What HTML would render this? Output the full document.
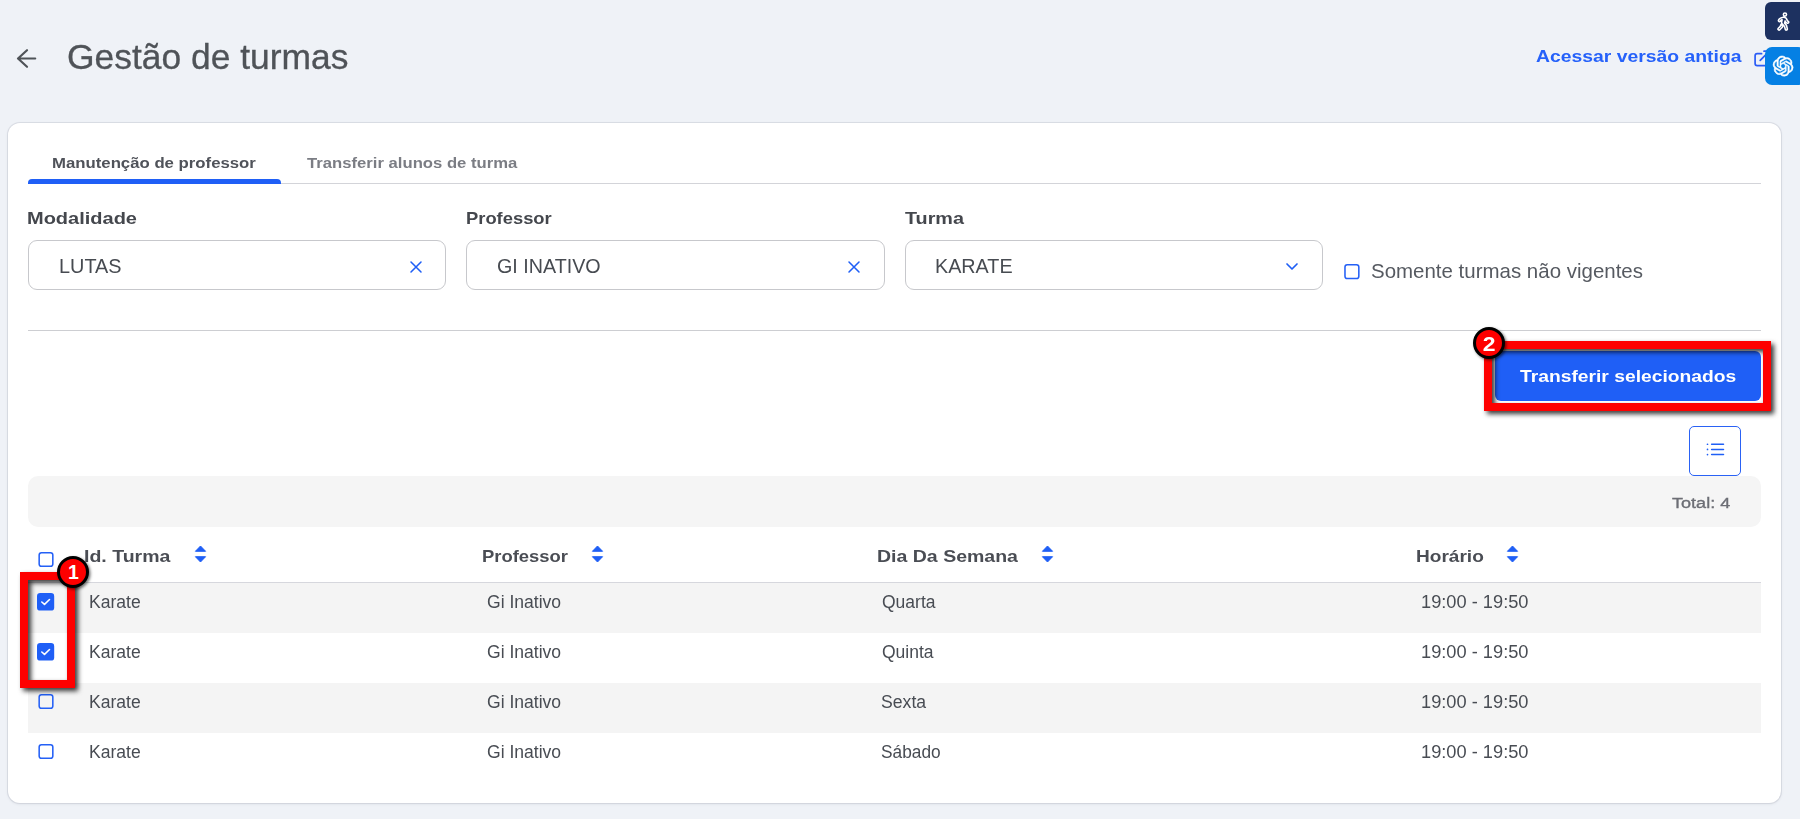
<!DOCTYPE html>
<html lang="pt-BR"><head><meta charset="utf-8"><title>Gestão de turmas</title>
<style>
*{margin:0;padding:0;box-sizing:border-box}
html,body{width:1800px;height:819px;overflow:hidden}
body{position:relative;background:#eff2f7;font-family:"Liberation Sans",sans-serif}
.a{position:absolute}
.t{position:absolute;transform-origin:0 50%;white-space:nowrap;line-height:1;font-family:"Liberation Sans",sans-serif}
.card{left:8px;top:123px;width:1773px;height:680px;background:#fff;border-radius:12px;box-shadow:0 0 0 1px rgba(200,204,214,.55),0 1px 3px rgba(60,70,90,.13)}
.inp{top:240px;height:50px;width:418px;border:1px solid #c7c8cc;border-radius:9px;background:#fff}
.cb{width:15px;height:15px;border:1.9px solid #2a62f5;border-radius:3px;background:#fff}
.cbc{width:17px;height:17px;border-radius:3.5px;background:#1f5ff6}
.row{left:28px;width:1733px;height:50px;background:#f4f4f4}
svg{position:absolute;overflow:visible}

</style></head>
<body>
<!-- back arrow -->
<svg style="left:16px;top:48px" width="22" height="22" viewBox="0 0 22 22" fill="none" stroke="#4f5358" stroke-width="2.200" stroke-linecap="round" stroke-linejoin="round"><path d="M19.200 10.500H2.200M11 2.200L2 10.500L11 18.800"/></svg>
<!-- external link icon -->
<svg style="left:0;top:0.600px" width="1800" height="100" viewBox="0 0 1800 100" fill="none" stroke="#2a5cf6" stroke-width="1.700" stroke-linecap="round" stroke-linejoin="round"><path d="M1761.600 52.700H1757.200A2.100 2.100 0 0 0 1755.100 54.800V62.600A2.100 2.100 0 0 0 1757.200 64.700H1766.500A2.100 2.100 0 0 0 1768.600 62.600V58.500M1760.200 59.400L1769.400 50.200M1764 50.200H1769.400V55.600"/></svg>
<div class="a card"></div>
<!-- tabs -->
<div class="a" style="left:28px;top:183px;width:1733px;height:1px;background:#d3d4d9"></div>
<div class="a" style="left:28px;top:179px;width:253px;height:4.500px;background:#1f5ff6;border-radius:4px 4px 0 0"></div>
<!-- inputs -->
<div class="a inp" style="left:28px"></div>
<div class="a inp" style="left:466px;width:419px"></div>
<div class="a inp" style="left:905px"></div>
<svg style="left:409.500px;top:260.500px" width="12" height="12" viewBox="0 0 12 12" fill="none" stroke="#1f5ff6" stroke-width="1.550" stroke-linecap="round"><path d="M1 1L11 11M11 1L1 11"/></svg>
<svg style="left:848px;top:260.500px" width="12" height="12" viewBox="0 0 12 12" fill="none" stroke="#1f5ff6" stroke-width="1.550" stroke-linecap="round"><path d="M1 1L11 11M11 1L1 11"/></svg>
<svg style="left:1286px;top:263px" width="12" height="7" viewBox="0 0 12 7" fill="none" stroke="#1f5ff6" stroke-width="1.7" stroke-linecap="round" stroke-linejoin="round"><path d="M1 1L6 6L11 1"/></svg>
<!-- hr -->
<div class="a" style="left:28px;top:330px;width:1733px;height:1px;background:#cdced2"></div>
<!-- button -->
<div class="a" style="left:1495px;top:351px;width:266px;height:50px;background:#1f5ff6;border-radius:6px"></div>
<!-- list button -->
<div class="a" style="left:1689px;top:426px;width:52px;height:50px;border:1px solid #2a62f5;border-radius:5px;background:#fff"></div>
<svg style="left:1706px;top:442px" width="19" height="14" viewBox="0 0 19 14" fill="none" stroke="#1f5ff6" stroke-width="1.500" stroke-linecap="round"><path d="M5.600 2.250H17.500M5.600 7.400H17.500M5.600 12.550H17.500"/><path d="M1.500 2.250h.01M1.500 7.400h.01M1.500 12.550h.01" stroke-width="1.700"/></svg>
<!-- total bar -->
<div class="a" style="left:28px;top:476px;width:1733px;height:51px;background:#f5f5f5;border-radius:10px"></div>
<!-- table -->
<div class="a" style="left:28px;top:582px;width:1733px;height:1px;background:#d6d7dd"></div>
<div class="a row" style="top:583px"></div>
<div class="a row" style="top:683px"></div>
<!-- checkboxes -->
<svg style="left:0;top:0" width="1800" height="819" viewBox="0 0 1800 819">
<rect x="1344.98" y="264.77" width="13.85" height="13.75" rx="2.3" fill="none" stroke="#2460f6" stroke-width="1.55"/>
<rect x="39.17" y="552.77" width="13.65" height="13.55" rx="2.3" fill="none" stroke="#2460f6" stroke-width="1.55"/>
<rect x="39.17" y="694.77" width="13.65" height="13.45" rx="2.3" fill="none" stroke="#2460f6" stroke-width="1.55"/>
<rect x="39.17" y="744.77" width="13.65" height="13.45" rx="2.3" fill="none" stroke="#2460f6" stroke-width="1.55"/>
<rect x="37" y="593.1" width="17.2" height="17.5" rx="3.2" fill="#1f5ff6"/><path d="M41.80 602.00L44.50 604.40L49.50 599.50" fill="none" stroke="#fff" stroke-width="1.600" stroke-linecap="round" stroke-linejoin="round"/>
<rect x="37" y="643.1" width="17.2" height="17.5" rx="3.2" fill="#1f5ff6"/><path d="M41.80 652.00L44.50 654.40L49.50 649.50" fill="none" stroke="#fff" stroke-width="1.600" stroke-linecap="round" stroke-linejoin="round"/>
</svg>
<!-- sort icons -->
<svg style="left:194px;top:545px" width="13" height="18" viewBox="0 0 13 18" fill="#1f5ff6" stroke="#1f5ff6" stroke-width="1" stroke-linejoin="round"><path d="M6.500 1L11.600 6.300H1.400ZM6.500 17L11.600 11.700H1.400Z"/></svg>
<svg style="left:590.700px;top:545px" width="13" height="18" viewBox="0 0 13 18" fill="#1f5ff6" stroke="#1f5ff6" stroke-width="1" stroke-linejoin="round"><path d="M6.500 1L11.600 6.300H1.400ZM6.500 17L11.600 11.700H1.400Z"/></svg>
<svg style="left:1040.500px;top:545px" width="13" height="18" viewBox="0 0 13 18" fill="#1f5ff6" stroke="#1f5ff6" stroke-width="1" stroke-linejoin="round"><path d="M6.500 1L11.600 6.300H1.400ZM6.500 17L11.600 11.700H1.400Z"/></svg>
<svg style="left:1506px;top:545px" width="13" height="18" viewBox="0 0 13 18" fill="#1f5ff6" stroke="#1f5ff6" stroke-width="1" stroke-linejoin="round"><path d="M6.500 1L11.600 6.300H1.400ZM6.500 17L11.600 11.700H1.400Z"/></svg>

<span class="t" style="left:66.77px;top:39.75px;font-size:34.5px;font-weight:400;color:#4f5358;transform:scaleX(1.0265);-webkit-text-stroke:0.3px #4f5358;">Gestão de turmas</span>
<span class="t" style="left:1535.63px;top:47.75px;font-size:16.5px;font-weight:700;color:#2561fa;transform:scaleX(1.1729);">Acessar versão antiga</span>
<span class="t" style="left:52.22px;top:155.00px;font-size:15px;font-weight:700;color:#50535a;transform:scaleX(1.1167);">Manutenção de professor</span>
<span class="t" style="left:306.67px;top:155.00px;font-size:15px;font-weight:700;color:#7b7d84;transform:scaleX(1.1114);">Transferir alunos de turma</span>
<span class="t" style="left:27.18px;top:210.00px;font-size:17px;font-weight:700;color:#44474d;transform:scaleX(1.1761);">Modalidade</span>
<span class="t" style="left:465.67px;top:210.00px;font-size:17px;font-weight:700;color:#44474d;transform:scaleX(1.0798);">Professor</span>
<span class="t" style="left:905.00px;top:210.00px;font-size:17px;font-weight:700;color:#44474d;transform:scaleX(1.1626);">Turma</span>
<span class="t" style="left:59.03px;top:256.25px;font-size:20.5px;font-weight:400;color:#474b51;transform:scaleX(0.9687);">LUTAS</span>
<span class="t" style="left:496.71px;top:256.25px;font-size:20.5px;font-weight:400;color:#474b51;transform:scaleX(0.9613);">GI INATIVO</span>
<span class="t" style="left:935.04px;top:256.25px;font-size:20.5px;font-weight:400;color:#474b51;transform:scaleX(0.9636);">KARATE</span>
<span class="t" style="left:1371.03px;top:260.00px;font-size:21px;font-weight:400;color:#565a61;transform:scaleX(0.9748);">Somente turmas não vigentes</span>
<span class="t" style="left:1519.94px;top:368.35px;font-size:17.3px;font-weight:700;color:#ffffff;transform:scaleX(1.1147);">Transferir selecionados</span>
<span class="t" style="left:1671.98px;top:494.75px;font-size:15.5px;font-weight:400;color:#6c6e75;transform:scaleX(1.1654);-webkit-text-stroke:0.35px #6c6e75;">Total: 4</span>
<span class="t" style="left:83.97px;top:549.20px;font-size:16.6px;font-weight:700;color:#4a4d54;transform:scaleX(1.1758);">Id. Turma</span>
<span class="t" style="left:481.76px;top:549.20px;font-size:16.6px;font-weight:700;color:#4a4d54;transform:scaleX(1.1099);">Professor</span>
<span class="t" style="left:876.92px;top:549.20px;font-size:16.6px;font-weight:700;color:#4a4d54;transform:scaleX(1.1757);">Dia Da Semana</span>
<span class="t" style="left:1415.94px;top:549.20px;font-size:16.6px;font-weight:700;color:#4a4d54;transform:scaleX(1.1492);">Horário</span>
<span class="t" style="left:88.70px;top:594.25px;font-size:17.5px;font-weight:400;color:#484c53;transform:scaleX(1.0037);">Karate</span>
<span class="t" style="left:487.00px;top:594.25px;font-size:17.5px;font-weight:400;color:#484c53;transform:scaleX(1.0025);">Gi Inativo</span>
<span class="t" style="left:882.19px;top:594.25px;font-size:17.5px;font-weight:400;color:#484c53;transform:scaleX(1.0002);">Quarta</span>
<span class="t" style="left:1420.75px;top:594.25px;font-size:17.5px;font-weight:400;color:#484c53;transform:scaleX(1.0424);">19:00 - 19:50</span>
<span class="t" style="left:88.70px;top:644.25px;font-size:17.5px;font-weight:400;color:#484c53;transform:scaleX(1.0037);">Karate</span>
<span class="t" style="left:487.00px;top:644.25px;font-size:17.5px;font-weight:400;color:#484c53;transform:scaleX(1.0025);">Gi Inativo</span>
<span class="t" style="left:882.19px;top:644.25px;font-size:17.5px;font-weight:400;color:#484c53;transform:scaleX(1.0002);">Quinta</span>
<span class="t" style="left:1420.75px;top:644.25px;font-size:17.5px;font-weight:400;color:#484c53;transform:scaleX(1.0424);">19:00 - 19:50</span>
<span class="t" style="left:88.70px;top:694.25px;font-size:17.5px;font-weight:400;color:#484c53;transform:scaleX(1.0037);">Karate</span>
<span class="t" style="left:487.00px;top:694.25px;font-size:17.5px;font-weight:400;color:#484c53;transform:scaleX(1.0025);">Gi Inativo</span>
<span class="t" style="left:881.19px;top:694.25px;font-size:17.5px;font-weight:400;color:#484c53;transform:scaleX(1.0082);">Sexta</span>
<span class="t" style="left:1420.75px;top:694.25px;font-size:17.5px;font-weight:400;color:#484c53;transform:scaleX(1.0424);">19:00 - 19:50</span>
<span class="t" style="left:88.70px;top:744.25px;font-size:17.5px;font-weight:400;color:#484c53;transform:scaleX(1.0037);">Karate</span>
<span class="t" style="left:487.00px;top:744.25px;font-size:17.5px;font-weight:400;color:#484c53;transform:scaleX(1.0025);">Gi Inativo</span>
<span class="t" style="left:881.21px;top:744.25px;font-size:17.5px;font-weight:400;color:#484c53;transform:scaleX(0.9879);">Sábado</span>
<span class="t" style="left:1420.75px;top:744.25px;font-size:17.5px;font-weight:400;color:#484c53;transform:scaleX(1.0424);">19:00 - 19:50</span>
<!-- red annotation boxes -->
<div class="a" style="left:1484px;top:341px;width:287px;height:70px;border:8px solid #fe0000;filter:drop-shadow(3px 3px 2.500px rgba(0,0,0,.78))"></div>
<div class="a" style="left:20px;top:572px;width:55px;height:116px;border:8px solid #fe0000;filter:drop-shadow(3px 3px 2.500px rgba(0,0,0,.78))"></div>
<!-- badges -->
<div class="a" style="left:1473px;top:327px;width:32px;height:32px;border-radius:50%;background:#fe0000;border:3.400px solid #000;box-shadow:1.500px 1.500px 3px rgba(0,0,0,.55)"></div>
<div class="a" style="left:57px;top:556px;width:32px;height:32px;border-radius:50%;background:#fe0000;border:3.400px solid #000;box-shadow:1.500px 1.500px 3px rgba(0,0,0,.55)"></div>
<span class="t" style="left:1473px;top:333.500px;width:32px;text-align:center;font-size:20.300px;font-weight:700;color:#fff;transform:scaleX(1.13);transform-origin:50% 50%">2</span>
<span class="t" style="left:57.400px;top:562.500px;width:32px;text-align:center;font-size:19.500px;font-weight:700;color:#fff;transform:scaleX(1.0);transform-origin:50% 50%">1</span>
<!-- right widgets -->
<div class="a" style="left:1765px;top:2px;width:40px;height:38px;background:#1d3160;border-radius:6px"></div>
<div class="a" style="left:1765px;top:47px;width:40px;height:38px;background:#0580e4;border-radius:7px"></div>
<svg style="left:1777.700px;top:12.900px" width="10.700" height="17.100" viewBox="0 0 320 512" fill="#1d3160" stroke="#fff" stroke-width="47" stroke-linejoin="round"><path d="M208 96c26.500 0 48-21.500 48-48S234.500 0 208 0s-48 21.500-48 48 21.500 48 48 48zm94.500 149.100l-23.300-11.800-9.700-29.400c-14.700-44.600-55.700-75.800-102.200-75.900-36-.1-55.900 10.100-93.300 25.200-21.600 8.700-39.300 25.200-49.700 46.200L17.600 213c-7.800 15.800-1.500 35 14.200 42.900 15.600 7.900 34.600 1.500 42.500-14.300L81 228c3.500-7 9.300-12.500 16.500-15.400l26.800-10.800-15.200 60.700c-5.200 20.800.4 42.900 14.900 58.800l59.900 65.400c7.200 7.900 12.300 17.400 14.900 27.700l18.300 73.300c4.300 17.100 21.700 27.600 38.800 23.300 17.100-4.300 27.600-21.700 23.300-38.800l-22.200-89c-2.600-10.300-7.700-19.900-14.900-27.700l-45.500-49.700 17.200-68.700 5.500 16.500c5.300 16.100 16.700 29.400 31.700 37l23.300 11.800c15.600 7.900 34.600 1.500 42.500-14.300 7.700-15.700 1.400-35.100-14.300-43zM73.600 385.800c-3.200 8.100-8 15.400-14.200 21.500l-50 50.100c-12.500 12.500-12.500 32.800 0 45.300s32.700 12.500 45.200 0l59.400-59.400c6.100-6.100 10.900-13.400 14.200-21.500l13.500-33.800c-55.300-60.300-38.700-41.800-47.400-53.700l-20.700 51.500z"/></svg>
<svg style="left:1772.800px;top:55.800px" width="20.200" height="20.200" viewBox="0 0 24 24" fill="#fff" stroke="#fff" stroke-width="0.700" stroke-linejoin="round"><path d="M22.2819 9.8211a5.9847 5.9847 0 0 0-.5157-4.9108 6.0462 6.0462 0 0 0-6.5098-2.9A6.0651 6.0651 0 0 0 4.9807 4.1818a5.9847 5.9847 0 0 0-3.9977 2.9 6.0462 6.0462 0 0 0 .7427 7.0966 5.98 5.98 0 0 0 .511 4.9107 6.051 6.051 0 0 0 6.5146 2.9001A5.9847 5.9847 0 0 0 13.2599 24a6.0557 6.0557 0 0 0 5.7718-4.2058 5.9894 5.9894 0 0 0 3.9977-2.9001 6.0557 6.0557 0 0 0-.7475-7.0729zm-9.022 12.6081a4.4755 4.4755 0 0 1-2.8764-1.0408l.1419-.0804 4.7783-2.7582a.7948.7948 0 0 0 .3927-.6813v-6.7369l2.02 1.1686a.071.071 0 0 1 .038.052v5.5826a4.504 4.504 0 0 1-4.4945 4.4944zm-9.6607-4.1254a4.4708 4.4708 0 0 1-.5346-3.0137l.142.0852 4.783 2.7582a.7712.7712 0 0 0 .7806 0l5.8428-3.3685v2.3324a.0804.0804 0 0 1-.0332.0615L9.74 19.9502a4.4992 4.4992 0 0 1-6.1408-1.6464zM2.3408 7.8956a4.485 4.485 0 0 1 2.3655-1.9728V11.6a.7664.7664 0 0 0 .3879.6765l5.8144 3.3543-2.0201 1.1685a.0757.0757 0 0 1-.071 0l-4.8303-2.7865A4.504 4.504 0 0 1 2.3408 7.872zm16.5963 3.8558L13.1038 8.364 15.1192 7.2a.0757.0757 0 0 1 .071 0l4.8303 2.7913a4.4944 4.4944 0 0 1-.6765 8.1042v-5.6772a.79.79 0 0 0-.407-.667zm2.0107-3.0231l-.142-.0852-4.7735-2.7818a.7759.7759 0 0 0-.7854 0L9.409 9.2297V6.8974a.0662.0662 0 0 1 .0284-.0615l4.8303-2.7866a4.4992 4.4992 0 0 1 6.6802 4.66zM8.3065 12.863l-2.02-1.1638a.0804.0804 0 0 1-.038-.0567V6.0742a4.4992 4.4992 0 0 1 7.3757-3.4537l-.142.0805L8.704 5.459a.7948.7948 0 0 0-.3927.6813zm1.0976-2.3654l2.602-1.4998 2.6069 1.4998v2.9994l-2.5974 1.4997-2.6067-1.4997Z"/></svg>

</body></html>
